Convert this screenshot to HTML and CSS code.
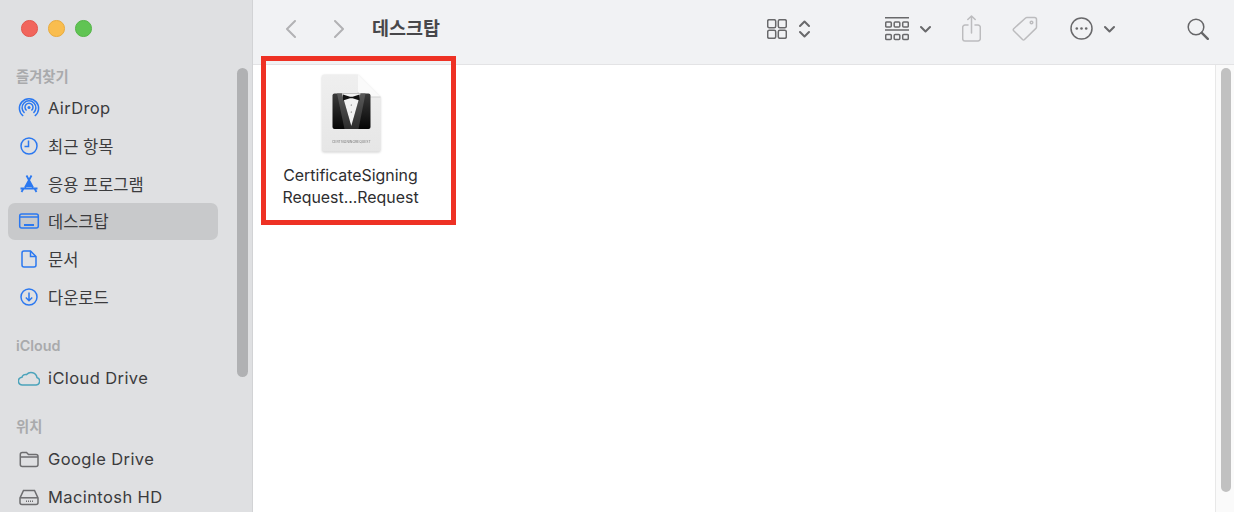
FILE: index.html
```html
<!DOCTYPE html>
<html lang="ko">
<head>
  <meta charset="UTF-8">
  <title>데스크탑</title>
  <meta name="viewport" content="width=device-width, initial-scale=1.0">
  <link rel="stylesheet" href="styles.css">
</head>
<body>
  <div class="window">
    <aside class="sidebar">
      <div class="lights">
        <span class="light red"></span>
        <span class="light yellow"></span>
        <span class="light green"></span>
      </div>

      <h4 class="group-title">즐겨찾기</h4>
      <div class="row latin">
        <svg class="ico blue" viewBox="0 0 22 22"><circle cx="11" cy="10.500" r="1.500" fill="currentColor" stroke="none"/><path d="M8.600 13.500a4 4 0 1 1 4.800 0"/><path d="M6.500 16a6.900 6.900 0 1 1 9 0"/><path d="M5.200 19a9.600 9.600 0 1 1 11.600 0"/></svg>
        <span>AirDrop</span>
      </div>
      <div class="row">
        <svg class="ico blue" viewBox="0 0 22 22"><circle cx="11" cy="11" r="8"/><path d="M10.500 5.500v6H6.500"/></svg>
        <span>최근 항목</span>
      </div>
      <div class="row">
        <svg class="ico blue wide" viewBox="0 0 22 22"><path d="M8.500 2.500l6.500 12M13.500 2.500L7 14.500M2.500 15.500h17M5.500 15.500l-2 3.500M16.500 15.500l2 3.500"/><path d="M11 7.500l-3.500 6.500h7z" fill="currentColor" stroke="none"/></svg>
        <span>응용 프로그램</span>
      </div>
      <div class="row selected">
        <svg class="ico blue" viewBox="0 0 22 22"><rect x="1.700" y="4" width="18.600" height="14" rx="2"/><path d="M2 7h18"/><path d="M6 15h10" stroke-width="2"/></svg>
        <span>데스크탑</span>
      </div>
      <div class="row">
        <svg class="ico blue" viewBox="0 0 22 22"><path d="M6 3h6.500L18 8.500V17a2 2 0 0 1-2 2H6a2 2 0 0 1-2-2V5a2 2 0 0 1 2-2z"/><path d="M12.500 3v5.500H18"/></svg>
        <span>문서</span>
      </div>
      <div class="row">
        <svg class="ico blue" viewBox="0 0 22 22"><circle cx="11" cy="11" r="8"/><path d="M11 6.500v8M7.800 11.500l3.200 3.200 3.200-3.200"/></svg>
        <span>다운로드</span>
      </div>

      <h4 class="group-title spaced">iCloud</h4>
      <div class="row latin">
        <svg class="ico teal" viewBox="0 0 22 22"><path d="M4.600 18a3.900 3.900 0 0 1-.6-7.800 3.600 3.600 0 0 1 4.600-2.600A6 6 0 0 1 19 10.600 3.800 3.800 0 0 1 18.200 18z"/></svg>
        <span>iCloud Drive</span>
      </div>

      <h4 class="group-title spaced">위치</h4>
      <div class="row latin">
        <svg class="ico gray" viewBox="0 0 22 22"><path d="M2.300 6.500a2 2 0 0 1 2-2H8.500l2 2H18a2 2 0 0 1 2 2V16.500a2 2 0 0 1-2 2H4.300a2 2 0 0 1-2-2z"/><path d="M2.500 9h17.500"/></svg>
        <span>Google Drive</span>
      </div>
      <div class="row latin">
        <svg class="ico gray" viewBox="0 0 22 22"><path d="M5.500 4.500h11l3.500 7.500v4.500a2 2 0 0 1-2 2H4a2 2 0 0 1-2-2V12z"/><path d="M2.200 11.800h17.600"/><path d="M8 15.200h8" stroke-dasharray="1 1"/></svg>
        <span>Macintosh HD</span>
      </div>

      <div class="side-thumb"></div>
    </aside>

    <section class="main">
      <header class="toolbar">
        <svg class="nav" width="11" height="18" viewBox="0 0 11 18"><path d="M10 1L2 9l8 8"/></svg>
        <svg class="nav next" width="11" height="18" viewBox="0 0 11 18"><path d="M1 1l8 8-8 8"/></svg>
        <h1 class="title">데스크탑</h1>

        <div class="tools">
          <svg width="20" height="20" viewBox="0 0 20 20"><rect x=".7" y=".7" width="8" height="8" rx="1.500"/><rect x="11.300" y=".7" width="8" height="8" rx="1.500"/><rect x=".7" y="11.300" width="8" height="8" rx="1.500"/><rect x="11.300" y="11.300" width="8" height="8" rx="1.500"/></svg>
          <svg class="ml12 thick" width="11" height="18" viewBox="0 0 11 18"><path d="M1 6l4.500-4.500L10 6M1 12l4.500 4.500L10 12"/></svg>

          <svg class="ml75" width="24" height="24" viewBox="0 0 24 24"><path d="M0 .7h24M0 13h24"/><rect x=".7" y="5" width="5.600" height="5" rx="1"/><rect x="9.200" y="5" width="5.600" height="5" rx="1"/><rect x="17.700" y="5" width="5.600" height="5" rx="1"/><rect x=".7" y="17.500" width="5.600" height="5" rx="1"/><rect x="9.200" y="17.500" width="5.600" height="5" rx="1"/><rect x="17.700" y="17.500" width="5.600" height="5" rx="1"/></svg>
          <svg class="ml11 thick" width="11" height="8" viewBox="0 0 11 8"><path d="M1 2l4.500 4.500L10 2"/></svg>

          <svg class="ml31 faded" width="19" height="27" viewBox="0 0 19 27"><path d="M6 10H3a2.300 2.300 0 0 0-2.300 2.300v11.400A2.300 2.300 0 0 0 3 26h13a2.300 2.300 0 0 0 2.300-2.300V12.300A2.300 2.300 0 0 0 16 10h-3"/><path d="M9.500 18V1M5.800 4.500L9.500 1l3.700 3.500"/></svg>
          <svg class="ml31 faded" width="26" height="25" viewBox="0 0 26 25"><path d="M15 1.500h7.500a2 2 0 0 1 2 2V11a2 2 0 0 1-.6 1.400L12.500 23.500a1.500 1.500 0 0 1-2 0L1.700 14.700a1.500 1.500 0 0 1 0-2L13.600 2a2 2 0 0 1 1.400-.5z"/><circle cx="19.500" cy="6.500" r="1.300"/></svg>

          <svg class="ml32" width="23" height="23" viewBox="0 0 23 23"><circle cx="11.500" cy="11.500" r="10.500"/><g class="dots"><circle cx="6.800" cy="11.500" r="1.300"/><circle cx="11.500" cy="11.500" r="1.300"/><circle cx="16.200" cy="11.500" r="1.300"/></g></svg>
          <svg class="ml11 thick" width="11" height="8" viewBox="0 0 11 8"><path d="M1 2l4.500 4.500L10 2"/></svg>

          <svg class="ml72 search" width="22" height="22" viewBox="0 0 22 22"><circle cx="9" cy="9" r="7.800"/><path d="M14.800 14.800l6 6" stroke-width="2.400"/></svg>
        </div>
      </header>

      <div class="content">
        <div class="files">
          <div class="file">
            <svg class="file-icon" width="60" height="78" viewBox="0 0 60 78">
              <defs>
                <linearGradient id="page" x1="0" y1="0" x2="0" y2="1">
                  <stop offset="0" stop-color="#efefef"/>
                  <stop offset="1" stop-color="#e6e6e6"/>
                </linearGradient>
                <linearGradient id="panel" x1="0" y1="0" x2="0" y2="1">
                  <stop offset="0" stop-color="#3a3a3a"/>
                  <stop offset="1" stop-color="#050505"/>
                </linearGradient>
                <linearGradient id="lapel" x1="0" y1="0" x2="0" y2="1">
                  <stop offset="0" stop-color="#5a5a5a"/>
                  <stop offset="1" stop-color="#2c2c2c"/>
                </linearGradient>
              </defs>
              <path d="M2 .5H36L58.500 23V75.500a2 2 0 0 1-2 2H2a2 2 0 0 1-2-2V2.500a2 2 0 0 1 2-2z" fill="url(#page)"/>
              <path d="M36 .5L58.500 23H41a5 5 0 0 1-5-5z" fill="#fafafa"/>
              <path d="M36 18a5 5 0 0 0 5 5H58.500" fill="none" stroke="#d2d2d2"/>
              <rect x="10.500" y="19.500" width="38" height="35.500" rx="2" fill="url(#panel)"/>
              <path d="M15 19.500h5L29.300 52l9.200-32.500h5L36.500 55h-14z" fill="url(#lapel)"/>
              <path d="M20 19.500H38.500L29.300 52z" fill="#f2f2f2"/>
              <path d="M21 20.500l7 2.300h2.600l7-2.300v6l-7-2.300H28l-7 2.300z" fill="#111"/>
              <circle cx="29.300" cy="31" r=".6" fill="#555"/>
              <circle cx="29.300" cy="38" r=".6" fill="#555"/>
              <text class="file-kind" x="29.300" y="68.500" text-anchor="middle">CERTSIGNINGREQUEST</text>
            </svg>
            <div class="file-name">CertificateSigning<br>Request...Request</div>
          </div>
        </div>
        <div class="scroll-track"><div class="scroll-thumb"></div></div>
      </div>
    </section>
  </div>
</body>
</html>
```

FILE: styles.css
```css
:root {
  --side-bg: #dfe0e2;
  --text: #3b3b3d;
  --blue: #2b78f0;
  --tool: #69696b;
  --tool-off: #bcbcbe;
}

* {
  box-sizing: border-box;
}

html, body {
  margin: 0;
  height: 100%;
  overflow: hidden;
}

body {
  font-family: Inter, "Noto Sans CJK KR", sans-serif;
  color: var(--text);
  background: #fff;
}

.window {
  display: flex;
  height: 512px;
}

/* sidebar */
.sidebar {
  position: relative;
  flex: 0 0 253px;
  height: 512px;
  overflow: hidden;
  background: var(--side-bg);
  border-right: 1px solid #d2d3d5;
}

.lights {
  display: flex;
  gap: 10.500px;
  height: 63.500px;
  padding: 20px 0 0 21px;
}

.light {
  width: 16.500px;
  height: 16.500px;
  border-radius: 50%;
}

.red { background: #f1655c; border: 1px solid #e2574e; }
.yellow { background: #f9bd4e; border: 1px solid #e8ab3f; }
.green { background: #60c453; border: 1px solid #55b549; }

.group-title {
  margin: 0 0 0 16px;
  height: 26px;
  line-height: 26px;
  font-size: 14.300px;
  font-weight: 600;
  color: #a9aaac;
}

.spaced {
  margin-top: 17.500px;
}

.row {
  display: flex;
  align-items: center;
  gap: 8px;
  width: 210px;
  height: 37.700px;
  margin-left: 8px;
  padding-left: 10px;
  border-radius: 7px;
  font-size: 16.500px;
  white-space: nowrap;
}

.latin {
  letter-spacing: .4px;
}

.selected {
  background: #c8c9cb;
}

.ico {
  flex: none;
  width: 22px;
  height: 22px;
  fill: none;
  stroke: currentColor;
  stroke-width: 1.500;
}

.blue { color: var(--blue); }
.teal { color: #4ba3bb; }
.gray { color: #6d6d6f; }
.wide { stroke-width: 1.800; }

.side-thumb {
  position: absolute;
  top: 68px;
  left: 237px;
  width: 11px;
  height: 309px;
  border-radius: 6px;
  background: #b0b1b3;
}

/* toolbar */
.main {
  flex: 1;
  display: flex;
  flex-direction: column;
  min-width: 0;
}

.toolbar {
  flex: 0 0 65px;
  display: flex;
  align-items: center;
  padding: 0 25px 7px 32px;
  background: #f1f2f4;
  border-bottom: 1px solid #e3e3e5;
}

.toolbar svg {
  flex: none;
  fill: none;
  stroke: var(--tool);
  stroke-width: 1.500;
  stroke-linecap: round;
  stroke-linejoin: round;
}

.toolbar .nav {
  stroke: #b2b2b4;
  stroke-width: 2;
}

.toolbar .next {
  margin-left: 38px;
}

.title {
  margin: 0 0 4px 27px;
  font-size: 18.500px;
  font-weight: 700;
  color: #47474a;
}

.tools {
  display: flex;
  align-items: center;
  margin-left: auto;
}

.toolbar .thick { stroke-width: 2; }
.toolbar .faded { stroke: var(--tool-off); }
.toolbar .search { stroke: #666668; }
.toolbar .dots { fill: var(--tool); stroke: none; }

.ml11 { margin-left: 11px; }
.ml12 { margin-left: 12px; }
.ml31 { margin-left: 31px; }
.ml32 { margin-left: 32px; }
.ml72 { margin-left: 72px; }
.ml75 { margin-left: 75px; }

/* file area */
.content {
  flex: 1;
  display: flex;
  min-height: 0;
}

.files {
  flex: 1;
}

.file {
  display: flex;
  flex-direction: column;
  align-items: center;
  width: 195px;
  height: 169px;
  margin: -9px 0 0 8px;
  padding: 13px 14px 0 0;
  border: 5px solid #ee3124;
}

.file-icon {
  filter: drop-shadow(0 1px 1px rgba(0,0,0,.18));
}

.file-kind {
  font-size: 3.400px;
  fill: #777;
}

.file-name {
  margin: 13px 2px 0 0;
  font-size: 15.900px;
  line-height: 22px;
  text-align: center;
  color: #2e2e30;
  white-space: nowrap;
}

.scroll-track {
  flex: 0 0 19px;
  padding: 3px 3px 0 5px;
  background: #fafafa;
  border-left: 1px solid #e8e8e8;
}

.scroll-thumb {
  height: 424px;
  border-radius: 6px;
  background: #c1c1c1;
}
```
